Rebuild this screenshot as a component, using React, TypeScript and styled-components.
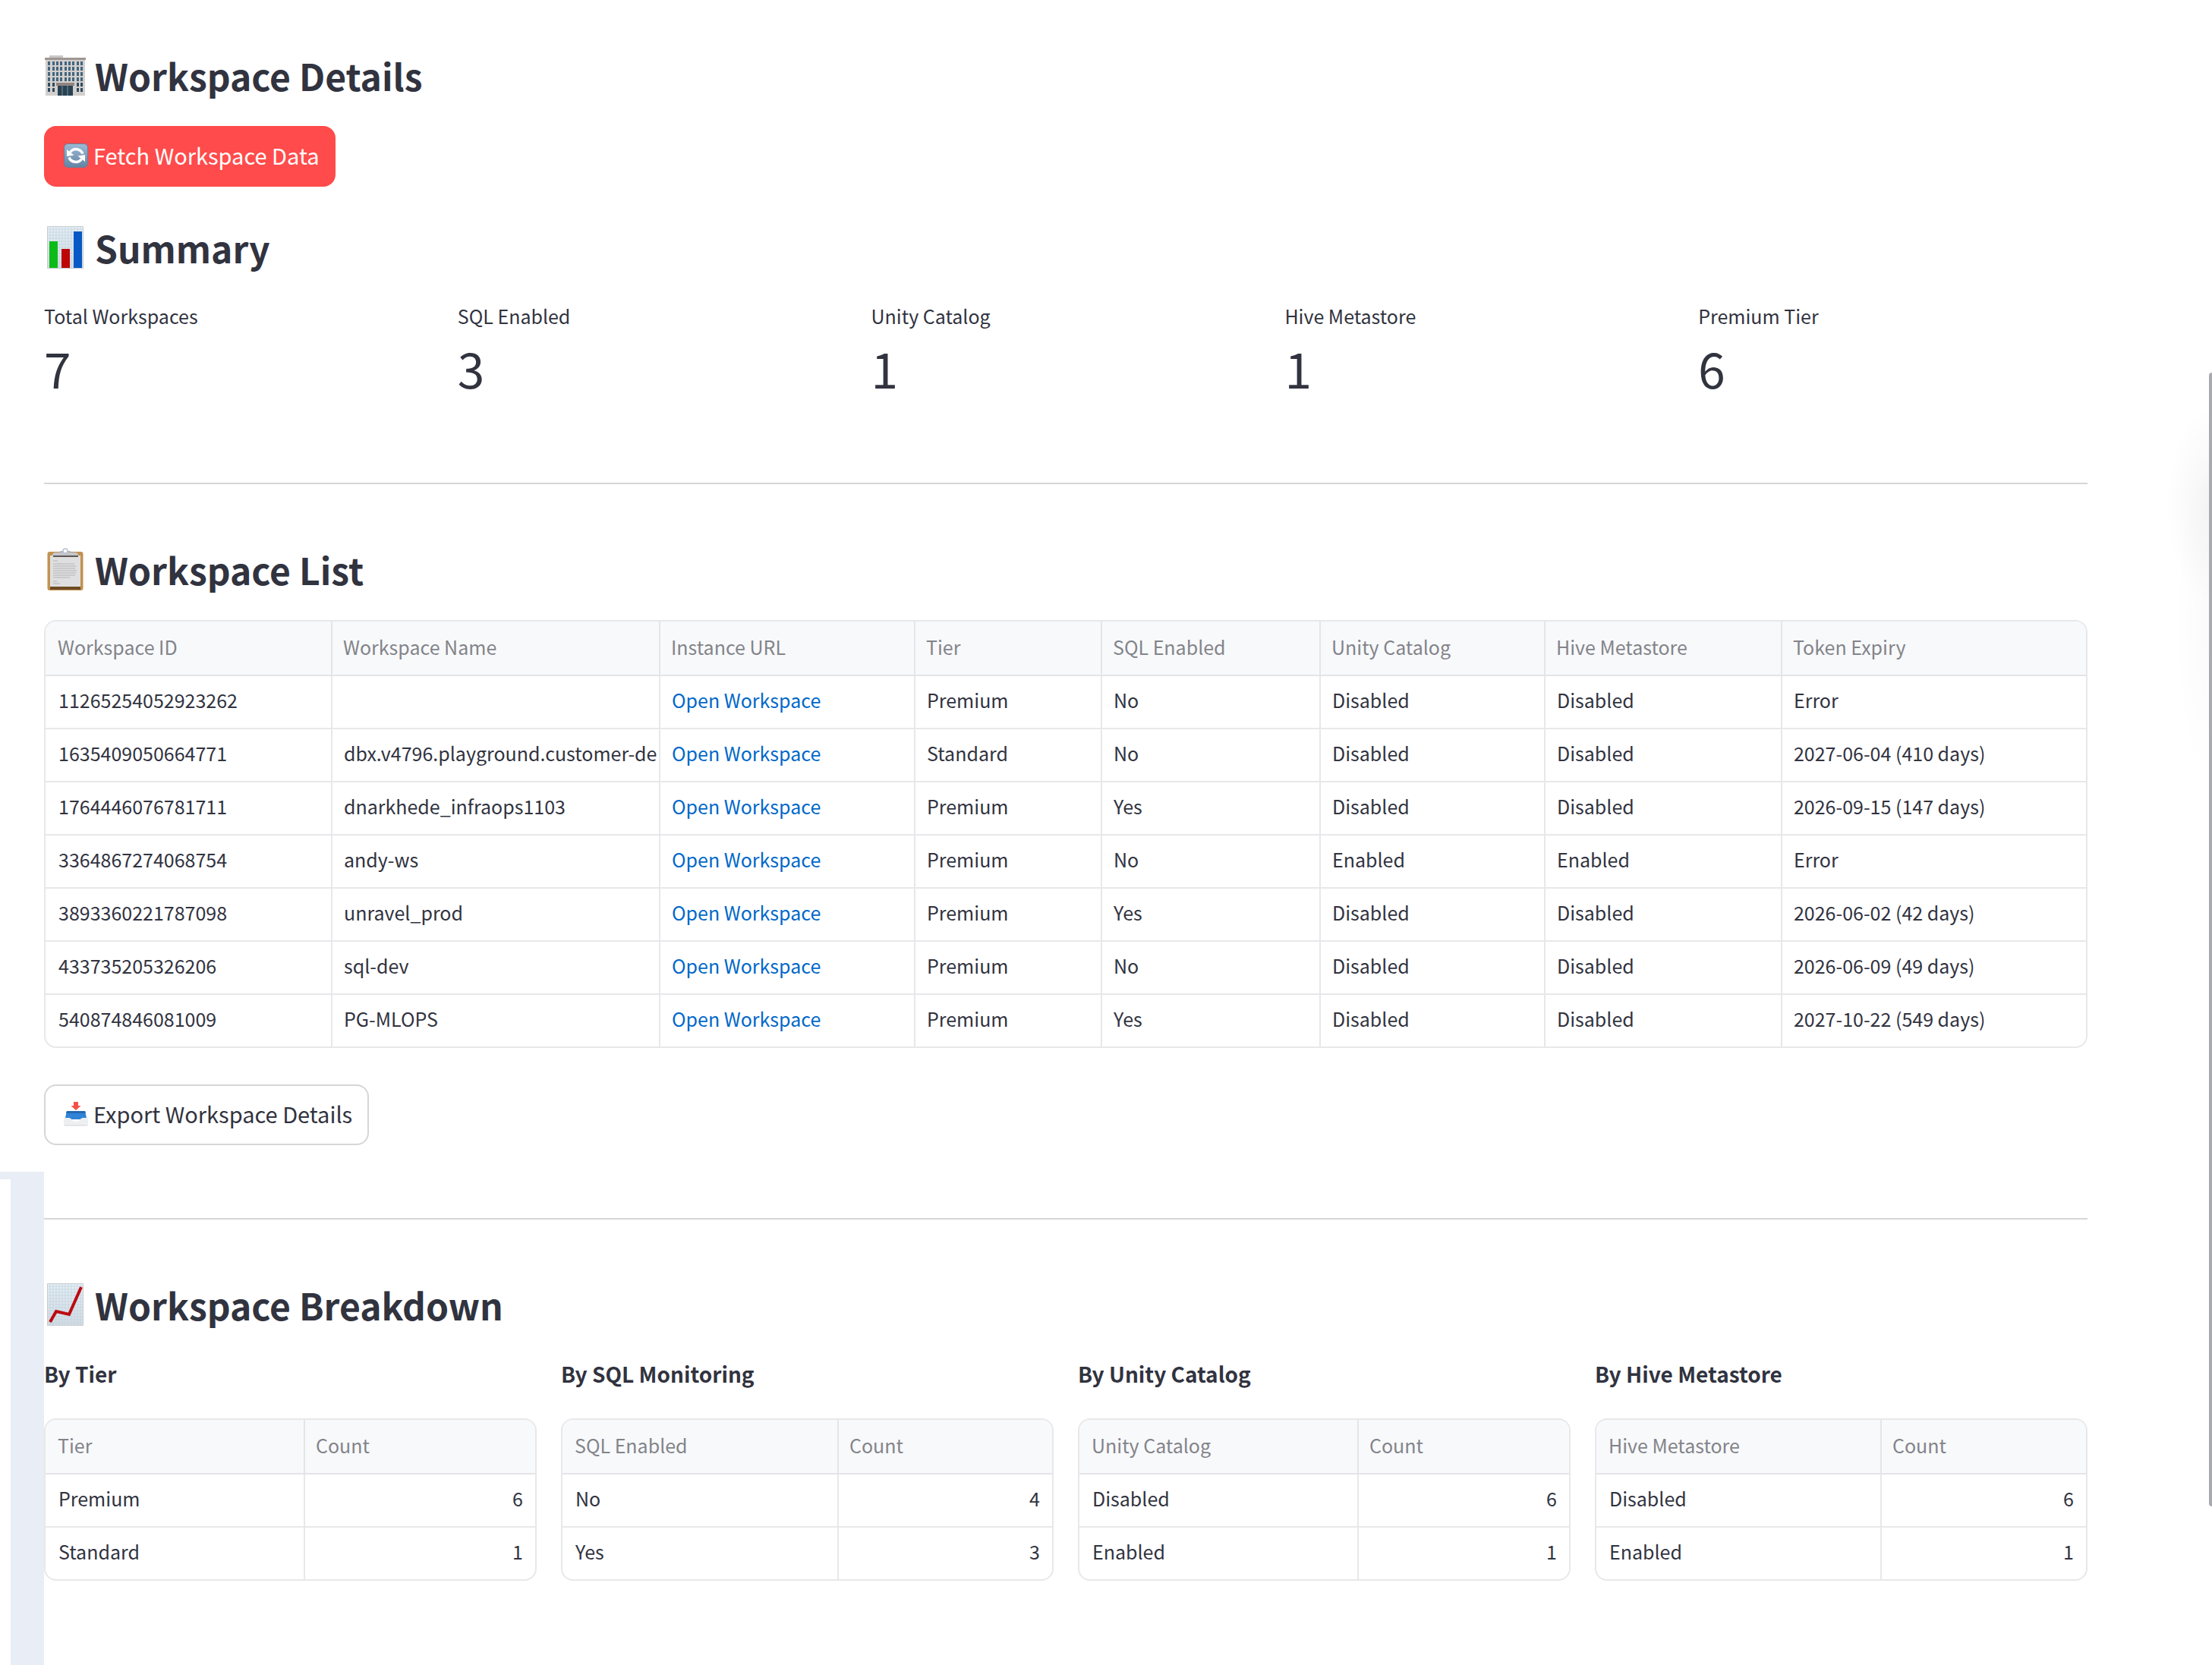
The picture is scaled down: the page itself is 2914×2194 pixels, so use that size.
import React from "react";
import styled, { createGlobalStyle } from "styled-components";

const Global = createGlobalStyle`
  *, *::before, *::after { box-sizing: border-box; }
  body { margin: 0; background: #fff; color: #31333f; font-family: "Noto Sans CJK SC", "Noto Sans", sans-serif; }
  h2, h3, p, dl, dd { margin: 0; }
`;

const Page = styled.div`
  position: relative;
  min-height: 100vh;
  padding: 65px 164px 110px 58px;
  overflow: hidden;
`;
const Title = styled.h2`
  display: flex;
  align-items: center;
  gap: 11px;
  font-size: 48px;
  font-weight: 700;
  line-height: 68px;
`;
const Glyph = styled.svg<{ $size: number }>`
  width: ${(p) => p.$size}px;
  height: ${(p) => p.$size}px;
  flex: none;
`;
const Section = styled.section<{ $top: number }>`
  margin-top: ${(p) => p.$top}px;
`;
const Button = styled.button<{ $primary?: boolean }>`
  display: flex;
  align-items: center;
  gap: 7px;
  height: 80px;
  padding: 0 20px 4px 24px;
  border: 2px solid ${(p) => (p.$primary ? "#ff4b4b" : "#d6d6d8")};
  border-radius: 16px;
  background: ${(p) => (p.$primary ? "#ff4b4b" : "#fff")};
  color: ${(p) => (p.$primary ? "#fff" : "#31333f")};
  font: 400 29px/48px "Noto Sans CJK SC", "Noto Sans", sans-serif;
  cursor: pointer;

  ${Glyph} { margin-top: 2px; }
`;
const Metrics = styled.dl`
  display: grid;
  grid-template-columns: repeat(5, 1fr);
  gap: 32px;
  margin-top: 36px;
  padding-bottom: 8px;
`;
const Label = styled.dt`
  font-size: 25px;
  line-height: 40px;
`;
const Value = styled.dd`
  font-size: 64px;
  line-height: 96px;
`;
const Divider = styled.hr`
  height: 2px;
  margin: 96px 0 0;
  border: 0;
  background: #d6d6d8;
`;
const Frame = styled.div`
  border: 2px solid #e8e8ea;
  border-radius: 16px;
  overflow: hidden;
`;
const Table = styled.table`
  width: 100%;
  table-layout: fixed;
  border-collapse: separate;
  border-spacing: 0;
  font-size: 25px;
  line-height: 40px;
`;
const Cell = styled.td<{ $right?: boolean }>`
  height: 70px;
  padding: 0 16px 6px 15px;
  border-right: 2px solid #e8e8ea;
  border-bottom: 2px solid #e8e8ea;
  text-align: ${(p) => (p.$right ? "right" : "left")};
  white-space: nowrap;
  overflow: hidden;
  &:first-child { padding-left: 17px; }
  &:last-child { border-right: 0; }
  tr:last-child > & { border-bottom: 0; height: 68px; }
`;
const Head = styled.th`
  height: 72px;
  padding: 0 16px 4px 14px;
  border-right: 2px solid #e4e5e8;
  border-bottom: 2px solid #e4e5e8;
  background: #f8f9fb;
  color: #83848a;
  font-weight: 400;
  text-align: left;
  white-space: nowrap;
  &:first-child { padding-left: 16px; }
  &:last-child { border-right: 0; }
`;
const Link = styled.a`
  color: #0068c9;
  text-decoration: none;
`;
const Groups = styled.div`
  display: grid;
  grid-template-columns: repeat(4, 1fr);
  gap: 32px;
  margin-top: 33px;
`;
const GroupTitle = styled.h3`
  margin-bottom: 35px;
  font-size: 28px;
  font-weight: 700;
  line-height: 48px;
`;
const UnderPanel = styled.div`
  position: absolute;
  top: 1544px;
  bottom: 0;
  left: 0;
  width: 58px;
  border-top: 10px solid #e9edf5;
  border-right: 44px solid #e9edf5;
`;
const EdgeShade = styled.div`
  position: absolute;
  top: 520px;
  right: 0;
  width: 62px;
  height: 480px;
  background:
    radial-gradient(ellipse 60px 130px at 100% 145px, rgba(0, 0, 0, 0.045), rgba(0, 0, 0, 0)),
    radial-gradient(ellipse 50px 220px at 100% 300px, rgba(0, 0, 0, 0.02), rgba(0, 0, 0, 0));
`;
const ScrollThumb = styled.div`
  position: absolute;
  top: 491px;
  right: 0;
  width: 4px;
  height: 1494px;
  border-radius: 4px 0 0 4px;
  background: #a9aaae;
`;

const Office = () => (
  <Glyph $size={56} viewBox="0 0 56 56" aria-hidden="true">
    <path d="M7 2h18v4H7z" fill="#c9c8c8" />
    <path d="M2 8h52v47H2z" fill="#d3cfcc" />
    <path d="M1 5h54v3H1z" fill="#9f9693" />
    {[10, 17, 24, 31].map((y) =>
      [5, 11, 16, 21, 27, 32, 37, 43, 48].map((x) => <path key={x + "-" + y} d={`M${x} ${y}h3v5h-3z`} fill="#416580" />)
    )}
    {[38, 45].map((y) =>
      [5, 11, 43, 48].map((x) => <path key={x + "-" + y} d={`M${x} ${y}h3v5h-3z`} fill="#2e4b60" />)
    )}
    <path d="M16 38h24v4H16z" fill="#8f8481" />
    <path d="M18 42h20v13H18z" fill="#274353" />
    <path d="M24 42v13M31 42v13" stroke="#8c8f92" strokeWidth="1" />
  </Glyph>
);
const GridPaper = ({ id }: { id: string }) => (
  <>
    <defs>
      <linearGradient id={id} x1="0" y1="0" x2="0" y2="1">
        <stop offset="0" stopColor="#e6eff5" />
        <stop offset="1" stopColor="#d4dbe2" />
      </linearGradient>
    </defs>
    <path d="M4 0h48v56H4z" fill={`url(#${id})`} />
    <path
      d="M8 1v54M12 1v54M16 1v54M20 1v54M24 1v54M28 1v54M32 1v54M36 1v54M40 1v54M44 1v54M48 1v54M5 4h46M5 8h46M5 12h46M5 16h46M5 20h46M5 24h46M5 28h46M5 32h46M5 36h46M5 40h46M5 44h46M5 48h46M5 52h46"
      stroke="#bfd3e0"
      strokeWidth="0.7"
    />
    <path d="M4.5.5h47v55h-47z" fill="none" stroke="#c6ccd1" />
  </>
);
const Bars = () => (
  <Glyph $size={56} viewBox="0 0 56 56" aria-hidden="true">
    <GridPaper id="paper-bars" />
    <path d="M7 20h11v35H7z" fill="#0dbb16" />
    <path d="M23 30h11v25H23z" fill="#bd0508" />
    <path d="M39 7h11v48H39z" fill="#0759c6" />
  </Glyph>
);
const Trend = () => (
  <Glyph $size={56} viewBox="0 0 56 56" aria-hidden="true">
    <GridPaper id="paper-trend" />
    <path d="M8 51l8-14 17 4L49 5" fill="none" stroke="#bb0b10" strokeWidth="4" />
  </Glyph>
);
const Clipboard = () => (
  <Glyph $size={56} viewBox="0 0 56 56" aria-hidden="true">
    <rect x="4.500" y="5" width="47" height="51" rx="3" fill="#c29250" />
    <path d="M8 51h40v4H8z" fill="#6e4c24" />
    <path d="M8 10h40v41H8z" fill="#dfdfe0" />
    <path d="M12 17h6M12 21h28M12 24h30M12 27h29M12 30h31M12 33h30M12 36h29M12 39h22M12 44h5M12 47h9" stroke="#c4c4c6" strokeWidth="1.5" />
    <path d="M12 11h33" stroke="#5f5752" strokeWidth="2" />
    <path d="M11 10q0-4 4-4h7l2-2h8l2 2h7q4 0 4 4z" fill="#c3c7cc" />
    <path d="M21 5h14" stroke="#8fb0d2" strokeWidth="1.5" />
    <circle cx="28" cy="4" r="3" fill="#fff" stroke="#b9c0c8" strokeWidth="1.5" />
  </Glyph>
);
const Refresh = () => (
  <Glyph $size={32} viewBox="0 0 32 32" aria-hidden="true">
    <defs>
      <linearGradient id="refresh-tile" x1="0" y1="0" x2="0" y2="1">
        <stop offset="0" stopColor="#9dbad4" />
        <stop offset="1" stopColor="#6484a5" />
      </linearGradient>
    </defs>
    <rect x="0.5" y="0.5" width="31" height="31" rx="5" fill="url(#refresh-tile)" stroke="#667f9b" />
    <path d="M8.500 11.500A9.500 9.500 0 0 1 25 13.500M23.500 20.500A9.500 9.500 0 0 1 7 18.500" fill="none" stroke="#fff" strokeWidth="3.5" />
    <path d="M4 17V8l9.500 7.500zM28 15v9l-9.500-7.500z" fill="#fff" />
  </Glyph>
);
const Outbox = () => (
  <Glyph $size={32} viewBox="0 0 32 32" aria-hidden="true">
    <path d="M4 12h24l2.500 11h-29z" fill="#3183d6" />
    <path d="M4 12h24l1 3H3z" fill="#2468b4" />
    <path d="M13 0h6v5h3.500L16 11 9.500 5H13z" fill="#f4504a" />
    <path d="M0 21h7q2 0 4 2.500 5 5 10 0 2-2.500 4-2.500h7v9q0 1.500-1.500 1.500h-29Q0 31.500 0 30z" fill="#eeeff1" />
    <path d="M1 31h30" stroke="#d5d6d9" />
  </Glyph>
);

const metrics = [
  ["Total Workspaces", "7"],
  ["SQL Enabled", "3"],
  ["Unity Catalog", "1"],
  ["Hive Metastore", "1"],
  ["Premium Tier", "6"],
];
const columns = [
  ["Workspace ID", 378],
  ["Workspace Name", 432],
  ["Instance URL", 336],
  ["Tier", 246],
  ["SQL Enabled", 288],
  ["Unity Catalog", 296],
  ["Hive Metastore", 312],
  ["Token Expiry", 400],
] as const;
const rows = [
  ["11265254052923262", "", "Premium", "No", "Disabled", "Disabled", "Error"],
  ["1635409050664771", "dbx.v4796.playground.customer-de", "Standard", "No", "Disabled", "Disabled", "2027-06-04 (410 days)"],
  ["1764446076781711", "dnarkhede_infraops1103", "Premium", "Yes", "Disabled", "Disabled", "2026-09-15 (147 days)"],
  ["3364867274068754", "andy-ws", "Premium", "No", "Enabled", "Enabled", "Error"],
  ["3893360221787098", "unravel_prod", "Premium", "Yes", "Disabled", "Disabled", "2026-06-02 (42 days)"],
  ["433735205326206", "sql-dev", "Premium", "No", "Disabled", "Disabled", "2026-06-09 (49 days)"],
  ["540874846081009", "PG-MLOPS", "Premium", "Yes", "Disabled", "Disabled", "2027-10-22 (549 days)"],
];
const groups = [
  { title: "By Tier", head: "Tier", first: 342, data: [["Premium", 6], ["Standard", 1]] },
  { title: "By SQL Monitoring", head: "SQL Enabled", first: 364, data: [["No", 4], ["Yes", 3]] },
  { title: "By Unity Catalog", head: "Unity Catalog", first: 368, data: [["Disabled", 6], ["Enabled", 1]] },
  { title: "By Hive Metastore", head: "Hive Metastore", first: 376, data: [["Disabled", 6], ["Enabled", 1]] },
];
const Col = styled.col<{ $share: number }>`
  width: ${(p) => p.$share}%;
`;

export default function App() {
  return (
    <>
      <Global />
      <Page>
        <Title><Office />Workspace Details</Title>
        <Section $top={33}>
          <Button $primary type="button"><Refresh />Fetch Workspace Data</Button>
        </Section>
        <Section $top={46}>
          <Title><Bars />Summary</Title>
          <Metrics>
            {metrics.map(([label, value]) => (
              <div key={label}>
                <Label>{label}</Label>
                <Value>{value}</Value>
              </div>
            ))}
          </Metrics>
        </Section>
        <Divider />
        <Section $top={78}>
          <Title><Clipboard />Workspace List</Title>
        </Section>
        <Section $top={33}>
          <Frame>
            <Table>
              <colgroup>
                {columns.map(([name, w]) => <Col key={name} $share={(w / 2688) * 100} />)}
              </colgroup>
              <thead>
                <tr>{columns.map(([name]) => <Head key={name} scope="col">{name}</Head>)}</tr>
              </thead>
              <tbody>
                {rows.map(([id, name, ...rest]) => (
                  <tr key={id}>
                    <Cell>{id}</Cell>
                    <Cell>{name}</Cell>
                    <Cell><Link href="#">Open Workspace</Link></Cell>
                    {rest.map((v, i) => <Cell key={i}>{v}</Cell>)}
                  </tr>
                ))}
              </tbody>
            </Table>
          </Frame>
        </Section>
        <Section $top={48}>
          <Button type="button"><Outbox />Export Workspace Details</Button>
        </Section>
        <Divider />
        <Section $top={78}>
          <Title><Trend />Workspace Breakdown</Title>
          <Groups>
            {groups.map((g) => (
              <div key={g.title}>
                <GroupTitle>{g.title}</GroupTitle>
                <Frame>
                  <Table>
                    <colgroup>
                      <Col $share={(g.first / 645) * 100} />
                      <col />
                    </colgroup>
                    <thead>
                      <tr><Head scope="col">{g.head}</Head><Head scope="col">Count</Head></tr>
                    </thead>
                    <tbody>
                      {g.data.map(([k, n]) => (
                        <tr key={k}><Cell>{k}</Cell><Cell $right>{n}</Cell></tr>
                      ))}
                    </tbody>
                  </Table>
                </Frame>
              </div>
            ))}
          </Groups>
        </Section>
        <UnderPanel />
        <EdgeShade />
        <ScrollThumb />
      </Page>
    </>
  );
}
